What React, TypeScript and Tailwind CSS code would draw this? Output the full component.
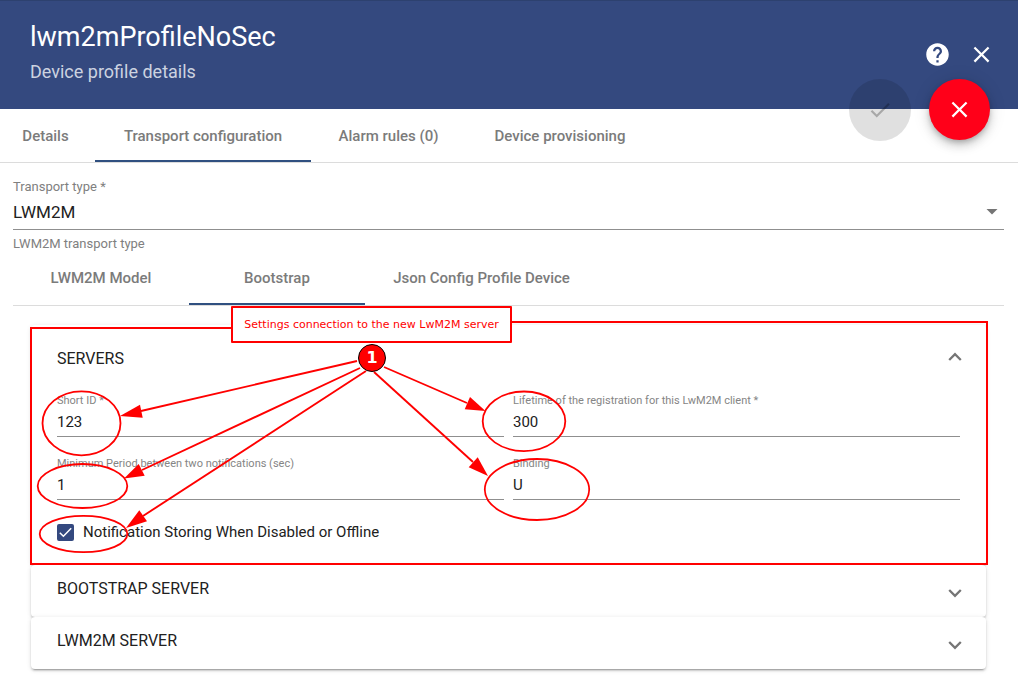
import { useState, type ReactNode } from "react";
import { MdCheck, MdClose, MdHelp } from "react-icons/md";

type TabItem = { label: string; className: string };

const profileTabs: TabItem[] = [
  { label: "Details", className: "w-[95px] pt-1 pr-1" },
  { label: "Transport configuration", className: "w-[216px] pt-1" },
  { label: "Alarm rules (0)", className: "w-[155px] pt-1" },
  { label: "Device provisioning", className: "w-[188px] pt-1" },
];

const transportTabs: TabItem[] = [
  { label: "LWM2M Model", className: "w-44" },
  { label: "Bootstrap", className: "w-44" },
  { label: "Json Config Profile Device", className: "w-[233px]" },
];

function Tabs({ items, initial, height }: { items: TabItem[]; initial: number; height: string }) {
  const [active, setActive] = useState(initial);
  return (
    <div role="tablist" className={`flex border-b border-[#dcdcdc] ${height}`}>
      {items.map((tab, i) => (
        <button
          key={tab.label}
          type="button"
          role="tab"
          aria-selected={i === active}
          onClick={() => setActive(i)}
          className={`border-b-2 text-[15px] font-medium whitespace-nowrap text-[#7b7b7b] ${
            i === active ? "border-[#305080]" : "border-transparent"
          } ${tab.className}`}
        >
          {tab.label}
        </button>
      ))}
    </div>
  );
}

function Field({ id, label, value }: { id: string; label: string; value: string }) {
  return (
    <div className="flex min-w-0 flex-col">
      <label htmlFor={id} className="text-[11px] leading-[14px] whitespace-nowrap text-[#858585]">
        {label}
      </label>
      <input
        id={id}
        defaultValue={value}
        className="h-[29px] w-full border-b border-[#8f8f8f] bg-transparent text-[15px] text-[#212121] outline-none"
      />
    </div>
  );
}

function Panel({ title, open, children }: { title: string; open?: boolean; children?: ReactNode }) {
  return (
    <section className="rounded bg-white shadow-[0_3px_1px_-2px_rgba(0,0,0,0.2),0_2px_2px_0_rgba(0,0,0,0.14),0_1px_5px_0_rgba(0,0,0,0.12)]">
      <button
        type="button"
        aria-expanded={!!open}
        className={`flex w-full items-center justify-between pr-6 pl-[26px] text-left text-base text-[#212121] ${
          open ? "h-[69px]" : "h-[52px]"
        }`}
      >
        <span className={open ? "pb-0.5" : "pb-1"}>{title}</span>
        <span className={open ? "pb-1.5" : "pt-1"}>
          <svg
            aria-hidden="true"
            viewBox="0 0 14 10"
            className="h-[10px] w-[14px]"
            fill="none"
            stroke="#757575"
            strokeWidth="2.3"
          >
            <path d={open ? "M1.2 8 L7 2.2 L12.8 8" : "M1.2 2 L7 7.8 L12.8 2"} />
          </svg>
        </span>
      </button>
      {children}
    </section>
  );
}

const arrows = [
  { line: "M357 361 L141 411", head: "120,416 140,404.7 142.7,417.7" },
  { line: "M360 368 L142 470", head: "124,478.5 138.7,464 144.7,475.7" },
  { line: "M366 371 L143 516", head: "126,528 139.3,510.3 147,521.3" },
  { line: "M384 367 L467 403", head: "485.5,411 470,397 464.7,409.3" },
  { line: "M374 372 L473 462", head: "488,476 477.7,457.3 468.7,467.3" },
];

const rings = [
  { cx: 81.5, cy: 423.3, rx: 39, ry: 32 },
  { cx: 82.5, cy: 486, rx: 44.8, ry: 22 },
  { cx: 83.5, cy: 534, rx: 43.8, ry: 18.2 },
  { cx: 524, cy: 421.3, rx: 41.3, ry: 29.8 },
  { cx: 537, cy: 489.5, rx: 52.2, ry: 30.5 },
];

function Annotations() {
  return (
    <>
      <svg
        aria-hidden="true"
        width="1018"
        height="694"
        viewBox="0 0 1018 694"
        className="pointer-events-none absolute top-0 left-0"
        fill="none"
        stroke="#ff0000"
      >
        <path d="M232 328 H31 V564 H987 V322 H511" strokeWidth="2" />
        {rings.map((r) => (
          <ellipse key={r.cy} {...r} strokeWidth="1.8" />
        ))}
        {arrows.map((a) => (
          <g key={a.head}>
            <path d={a.line} strokeWidth="1.9" />
            <polygon points={a.head} fill="#ff0000" stroke="none" />
          </g>
        ))}
      </svg>
      <div className="pointer-events-none absolute top-[306px] left-[231px] flex h-[37px] w-[281px] items-center justify-center rounded-[1px] border-2 border-[#ff0000] bg-white pt-0.5 font-['DejaVu_Sans',sans-serif] text-[11px] whitespace-nowrap text-[#ff0000]">
        Settings connection to the new LwM2M server
      </div>
      <div className="pointer-events-none absolute top-[344px] left-[358px] flex size-7 items-center justify-center rounded-full border border-black bg-[#ff0000] font-['DejaVu_Sans',sans-serif] text-base font-bold text-white">
        1
      </div>
    </>
  );
}

export default function App() {
  const [stored, setStored] = useState(true);
  return (
    <div className="relative min-h-screen bg-white font-[Roboto,sans-serif] text-[#212121]">
      <header className="relative flex h-[109px] justify-between border-t border-[#2d416f] bg-[#34497f] pr-[23px] pl-[30px] text-white">
        <div className="pt-[18px]">
          <h1 className="text-[27px] leading-9">lwm2mProfileNoSec</h1>
          <p className="pt-[3px] text-lg leading-7 text-[#ccd3e0]">Device profile details</p>
        </div>
        <div className="flex items-start gap-[17px] pt-10">
          <button type="button" aria-label="Help">
            <MdHelp className="size-[27px]" />
          </button>
          <button type="button" aria-label="Close">
            <MdClose className="size-[27px]" />
          </button>
        </div>
        <div className="absolute right-7 -bottom-8 flex gap-[18px]">
          <button
            type="button"
            disabled
            aria-label="Apply changes"
            className="flex size-[62px] items-center justify-center rounded-full bg-black/12 text-black/25"
          >
            <MdCheck className="size-[26px]" />
          </button>
          <button
            type="button"
            aria-label="Discard changes"
            className="flex size-[61px] items-center justify-center rounded-full bg-[#ff0019] shadow-[0_3px_5px_-1px_rgba(0,0,0,0.2),0_6px_10px_0_rgba(0,0,0,0.14),0_1px_18px_0_rgba(0,0,0,0.12)]"
          >
            <MdClose className="size-[27px]" />
          </button>
        </div>
      </header>

      <Tabs items={profileTabs} initial={1} height="h-[54px]" />

      <main className="pt-4 pr-[14px] pb-6 pl-[13px]">
        <div className="flex flex-col">
          <label htmlFor="transport-type" className="text-[13px] leading-4 text-[#808080]">
            Transport type *
          </label>
          <div className="relative">
            <select
              id="transport-type"
              className="block h-[35px] w-full appearance-none border-b border-[#8f8f8f] bg-transparent pt-0.5 text-[17px] text-[#212121] outline-none"
            >
              <option>LWM2M</option>
            </select>
            <svg
              aria-hidden="true"
              viewBox="0 0 12 6"
              className="pointer-events-none absolute top-[14px] right-[6px] h-[6px] w-3 fill-[#757575]"
            >
              <path d="M0.5 0h11L6 5.6z" />
            </svg>
          </div>
          <p className="pt-[5px] text-[13px] leading-[18px] text-[#808080]">LWM2M transport type</p>
        </div>

        <Tabs items={transportTabs} initial={1} height="h-[53px]" />

        <div className="flex flex-col px-[18px] pt-[19px]">
          <Panel title="SERVERS" open>
            <div className="px-[26px] pb-[23px]">
              <div className="grid grid-cols-2 gap-x-[9px] gap-y-5">
                <Field id="short-id" label="Short ID *" value="123" />
                <Field
                  id="lifetime"
                  label="Lifetime of the registration for this LwM2M client *"
                  value="300"
                />
                <Field
                  id="min-period"
                  label="Minimum Period between two notifications (sec)"
                  value="1"
                />
                <Field id="binding" label="Binding" value="U" />
              </div>
              <label className="flex items-center gap-[9px] pt-[22px] text-[15px] leading-5">
                <span className="relative flex size-[17px]">
                  <input
                    type="checkbox"
                    checked={stored}
                    onChange={(e) => setStored(e.target.checked)}
                    className="size-[17px] appearance-none rounded-[2px] border-2 border-[#757575] checked:border-[#34497f] checked:bg-[#34497f]"
                  />
                  {stored && (
                    <svg
                      aria-hidden="true"
                      viewBox="0 0 17 17"
                      className="pointer-events-none absolute inset-0"
                      fill="none"
                      stroke="#fff"
                      strokeWidth="1.5"
                    >
                      <path d="M2.8 8.7 L6.4 12.3 L14.2 4.3" />
                    </svg>
                  )}
                </span>
                Notification Storing When Disabled or Offline
              </label>
            </div>
          </Panel>
          <Panel title="BOOTSTRAP SERVER" />
          <Panel title="LWM2M SERVER" />
        </div>
      </main>

      <Annotations />
    </div>
  );
}
